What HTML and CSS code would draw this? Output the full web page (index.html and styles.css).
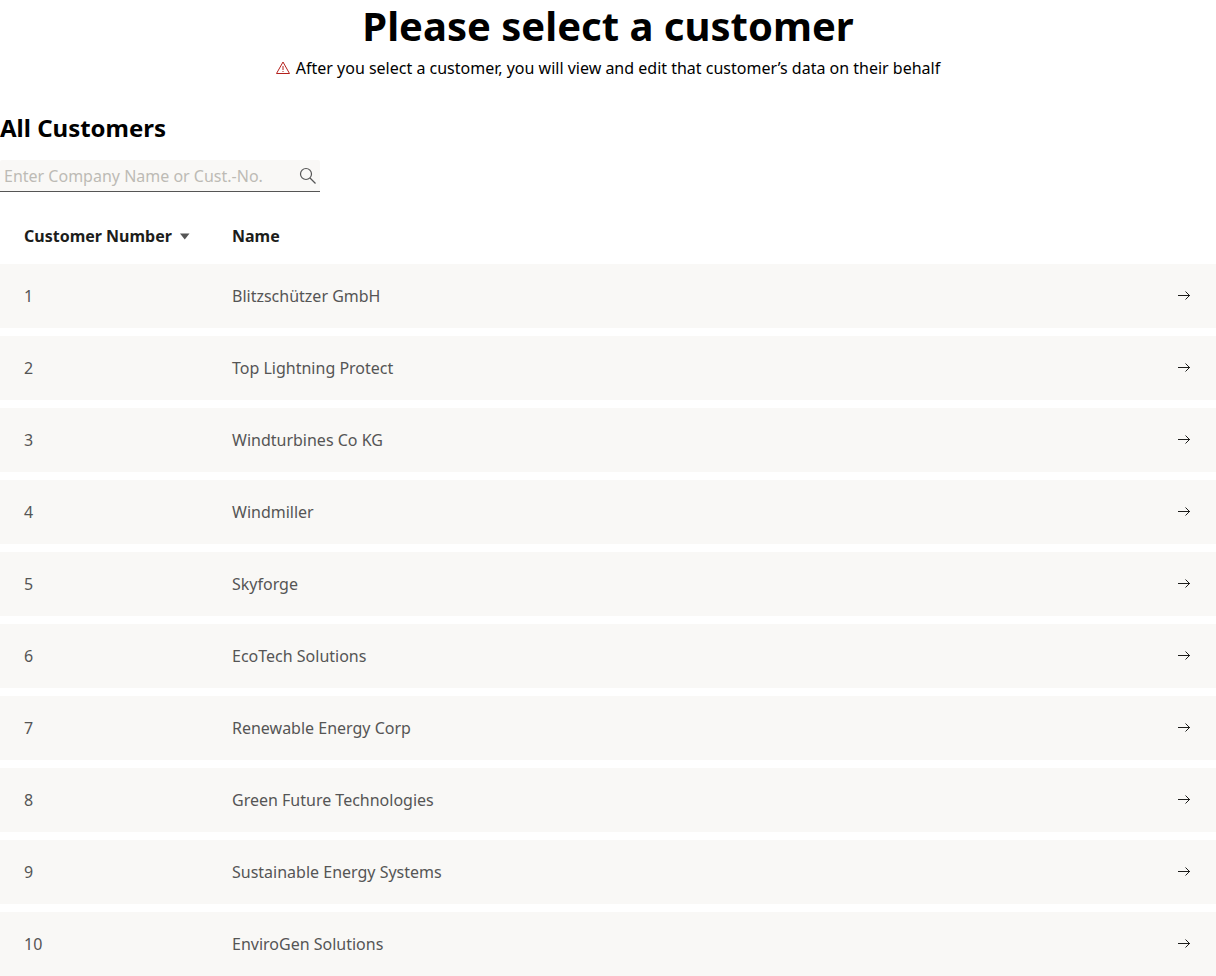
FILE: index.html
```
<!DOCTYPE html>
<html lang="en">
<head>
    <meta charset="UTF-8">
    <meta name="viewport" content="width=device-width, initial-scale=1.0">
    <title>Select a customer</title>
    <link rel="stylesheet" href="styles.css">
</head>
<body>
    <svg class="sprite" aria-hidden="true">
        <symbol id="arrow" viewBox="0 0 16 16">
            <path d="M2 7.500h12M9.500 3.500l4 4l-4 4"/>
        </symbol>
    </svg>

    <header class="intro">
        <h1>Please select a customer</h1>
        <p class="notice">
            <svg class="warning-icon" viewBox="0 0 16 16" aria-hidden="true">
                <path d="M7 2L13.500 13.500H.5Z"/>
                <path d="M7 6v4M7 11v1"/>
            </svg>
            After you select a customer, you will view and edit that customer’s data on their behalf
        </p>
    </header>

    <main>
        <h2>All Customers</h2>

        <form class="search" onsubmit="return false">
            <input type="text" id="search" aria-label="Search customers" placeholder="Enter Company Name or Cust.-No.">
            <button type="submit" class="search-button" aria-label="Search">
                <svg viewBox="0 0 18 18" aria-hidden="true">
                    <circle cx="8" cy="7" r="5.500"/>
                    <path d="M12 11l5.500 5.500"/>
                </svg>
            </button>
        </form>

        <table class="customers">
            <thead>
                <tr>
                    <th class="number" aria-sort="descending">
                        <button type="button" class="sort">Customer Number
                            <svg viewBox="0 0 10 8" aria-hidden="true"><path d="M0 1.500h9.500l-4.750 6z"/></svg>
                        </button>
                    </th>
                    <th>Name</th>
                    <th class="action"></th>
                </tr>
            </thead>
            <tbody id="customer-rows"></tbody>
        </table>
    </main>

    <script>
        const customers = [
            "Blitzschützer GmbH",
            "Top Lightning Protect",
            "Windturbines Co KG",
            "Windmiller",
            "Skyforge",
            "EcoTech Solutions",
            "Renewable Energy Corp",
            "Green Future Technologies",
            "Sustainable Energy Systems",
            "EnviroGen Solutions"
        ];

        const rows = document.getElementById("customer-rows");

        customers.forEach((name, index) => {
            const row = document.createElement("tr");
            row.innerHTML = `
                <td>${index + 1}</td>
                <td>${name}</td>
                <td class="action">
                    <a href="#" class="select" aria-label="Select ${name}"><svg><use href="#arrow"/></svg></a>
                </td>`;
            rows.appendChild(row);
        });
    </script>
</body>
</html>
```
FILE: styles.css
```
* {
    box-sizing: border-box;
}

body {
    margin: 0;
    background-color: #fff;
    color: #000;
    font-family: "Noto Sans", sans-serif;
    font-size: 16px;
    line-height: 24px;
}

svg {
    fill: none;
    stroke: #1d1d1b;
}

.sprite {
    display: none;
}

.intro {
    text-align: center;
}

h1 {
    margin: 0;
    font-size: 40px;
    line-height: 52px;
}

.notice {
    display: flex;
    justify-content: center;
    align-items: center;
    gap: 4px;
    margin: 4px 0 32px;
}

.warning-icon {
    width: 16px;
    height: 16px;
    stroke: #b4201c;
}

h2 {
    margin: 0 0 16px;
    font-size: 24px;
    line-height: 32px;
}

.search {
    display: flex;
    align-items: center;
    width: 320px;
    height: 32px;
    margin-bottom: 16px;
    padding: 0 4px;
    border-bottom: 1px solid #555;
    border-radius: 2px 2px 0 0;
    background-color: #f9f8f6;
}

.search input {
    flex: 1;
    min-width: 0;
    padding: 0;
    border: none;
    outline: none;
    background: none;
    color: #222;
    font: inherit;
}

.search input::placeholder {
    color: #bdbbb5;
    opacity: 1;
}

.search-button {
    display: flex;
    padding: 0;
    border: none;
    background: none;
    cursor: pointer;
}

.search-button svg {
    width: 18px;
    height: 18px;
    stroke: #555;
    stroke-width: 1.2;
}

.customers {
    width: 100%;
    border-spacing: 0;
    table-layout: fixed;
}

.customers th {
    height: 56px;
    padding: 0 0 0 24px;
    color: #1d1d1b;
    text-align: left;
}

.customers .number {
    width: 208px;
}

.customers .action {
    width: 64px;
    padding: 0 24px 0 0;
}

.sort {
    display: flex;
    align-items: center;
    gap: 8px;
    padding: 0;
    border: none;
    background: none;
    color: inherit;
    font: inherit;
    cursor: pointer;
}

.sort svg {
    width: 10px;
    height: 8px;
    fill: #555;
    stroke: none;
}

.customers td {
    height: 72px;
    padding: 0 0 0 24px;
    border-bottom: 8px solid #fff;
    background-color: #f9f8f6;
    color: #555;
}

.customers tbody tr:last-child td {
    height: 64px;
    border-bottom: none;
}

.select {
    display: flex;
    justify-content: flex-end;
}

.select svg {
    width: 16px;
    height: 16px;
}
```
